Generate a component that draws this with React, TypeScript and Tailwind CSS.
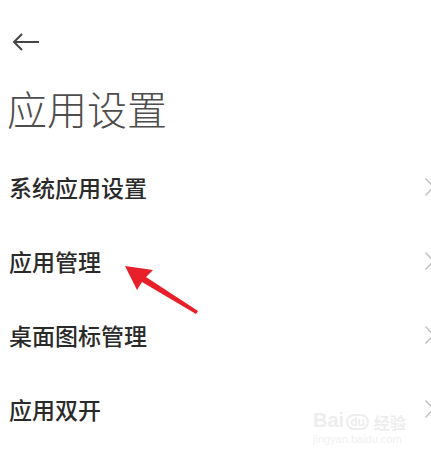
import React from "react";

const items = ["系统应用设置", "应用管理", "桌面图标管理", "应用双开"];

function Chevron() {
  return (
    <div className="w-[7px] h-[20px] overflow-hidden shrink-0">
      <svg width="12" height="20" viewBox="0 0 12 20" fill="none">
        <path d="M1.5 1.5 L9.5 10 L1.5 18.5" stroke="#c4c4c4" strokeWidth="1.6" />
      </svg>
    </div>
  );
}

export default function App() {
  return (
    <div
      className="relative w-[431px] h-[459px] overflow-hidden bg-white"
      style={{ fontFamily: '"Noto Sans CJK SC", "Noto Sans", sans-serif' }}
    >
      <div className="h-[24px]" />
      <div className="h-[36px] flex items-center pl-[12px]">
        <svg width="28" height="20" viewBox="0 0 28 20" fill="none">
          <path d="M27 10 H2 M10 2 L2 10 L10 18" stroke="#444" strokeWidth="2" strokeLinejoin="miter" />
        </svg>
      </div>
      <div className="h-[90px] flex items-center pl-[7px] pt-[6px]">
        <span className="text-[40px] leading-none font-light text-[#4d4d4d]">应用设置</span>
      </div>
      <div className="flex flex-col">
        {items.map((t) => (
          <div key={t} className="h-[74px] flex items-center justify-between pl-[9px]">
            <span className="text-[23px] leading-none font-medium text-[#2a2a2a]">{t}</span>
            <Chevron />
          </div>
        ))}
      </div>

      {/* watermark */}
      <div className="absolute left-[313px] top-[410px] flex flex-col items-start opacity-40">
        <div className="flex items-end gap-[2px] text-[#d4d4d4]">
          <span className="text-[20px] leading-none font-bold" style={{ fontFamily: '"Liberation Sans", sans-serif' }}>Bai</span>
          <span className="text-[12px] leading-none font-bold rounded-full border-2 border-[#d4d4d4] px-[2px]" style={{ fontFamily: '"Liberation Sans", sans-serif' }}>du</span>
          <span className="text-[16px] leading-none font-bold ml-[3px]">经验</span>
        </div>
        <span className="text-[11px] leading-none mt-[4px] text-[#dadada]" style={{ fontFamily: '"Liberation Sans", sans-serif' }}>jingyan.baidu.com</span>
      </div>

      {/* red annotation arrow */}
      <svg className="absolute left-0 top-0" width="431" height="459" viewBox="0 0 431 459">
        <path d="M125 266 L153 270 L146 277 L198 311 L196 314 L142 282 L137 290 Z" fill="#e8202a" />
      </svg>
    </div>
  );
}
